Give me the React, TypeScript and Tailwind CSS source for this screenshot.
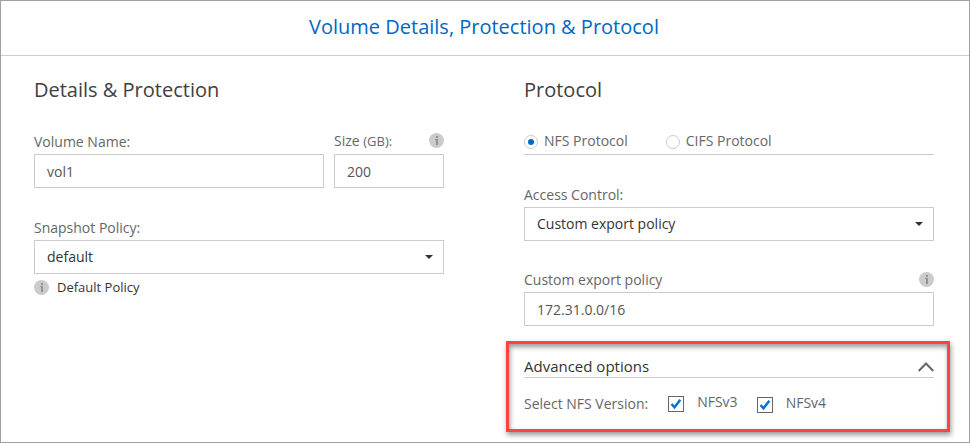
import type { ReactNode } from "react";

function InfoIcon() {
  return (
    <svg width="15" height="15" viewBox="0 0 15 15" className="block shrink-0">
      <circle cx="7.5" cy="7.5" r="7.5" fill="#cbcbcb" />
      <rect x="7" y="3" width="2" height="2" fill="#929292" />
      <path d="M6 6H9V12H7V7H6Z" fill="#929292" />
    </svg>
  );
}

function Caret() {
  return (
    <svg width="8" height="4" viewBox="0 0 8 4" className="block shrink-0">
      <path d="M0 0H8L4 4Z" fill="#333" />
    </svg>
  );
}

function Label({ children, info }: { children: ReactNode; info?: boolean }) {
  return (
    <div className="flex h-5 items-start justify-between leading-[17px]">
      <span>{children}</span>
      {info && (
        <span className="mt-px">
          <InfoIcon />
        </span>
      )}
    </div>
  );
}

function TextField({ value }: { value: string }) {
  return (
    <div className="flex h-[34px] items-center border border-[#ccc] px-3 pt-0.5 text-[#555]">{value}</div>
  );
}

function Select({ value }: { value: string }) {
  return (
    <div className="flex h-[34px] items-center justify-between border border-[#ccc] pr-[10px] pl-3 text-[#333]">
      <span>{value}</span>
      <Caret />
    </div>
  );
}

function Radio({ label, checked }: { label: string; checked?: boolean }) {
  return (
    <div className="flex items-start">
      <span className="mt-[3px] mr-1.5 flex size-[14px] items-center justify-center rounded-full border border-[#ccc]">
        {checked && <span className="size-[6px] rounded-full bg-[#0067c5]" />}
      </span>
      <span className="leading-[17px]">{label}</span>
    </div>
  );
}

function Checkbox({ label }: { label: string }) {
  return (
    <div className="flex items-start">
      <svg width="16" height="16" viewBox="0 0 16 16" className="mr-[13px] block">
        <rect x="0.5" y="0.5" width="15" height="15" fill="#fff" stroke="#666" />
        <path d="M3.5 8L6.5 11.3L12.3 3.8" fill="none" stroke="#0070d2" strokeWidth="2.4" />
      </svg>
      <span className="-mt-[3px] leading-[17px]">{label}</span>
    </div>
  );
}

export default function App() {
  return (
    <div className="flex h-[443px] w-[970px] flex-col border border-[#a0a0a0] bg-white font-['Open_Sans',sans-serif] text-sm text-[#666]">
      <header className="flex h-[55px] shrink-0 items-center justify-center border-b border-[#ccc] pr-0.5 pb-0.5 text-xl text-[#0067c5]">
        Volume Details, Protection &amp; Protocol
      </header>
      <main className="flex gap-20 px-[33px] pt-5">
        <section className="w-[410px]">
          <h2 className="h-14 text-xl leading-7 text-[#404040]">Details &amp; Protection</h2>
          <div className="flex gap-[10px]">
            <div className="w-[290px]">
              <div className="pt-px pb-px">
                <Label>Volume Name:</Label>
              </div>
              <TextField value="vol1" />
            </div>
            <div className="w-[110px]">
              <div className="pb-0.5">
                <Label info>
                  Size <span className="text-[13px]">(GB):</span>
                </Label>
              </div>
              <TextField value="200" />
            </div>
          </div>
          <div className="mt-[31px] mb-px">
            <Label>Snapshot Policy:</Label>
          </div>
          <Select value="default" />
          <div className="mt-1.5 flex items-start gap-2 text-[13px] leading-[15px] text-[#333]">
            <InfoIcon />
            <span>Default Policy</span>
          </div>
        </section>
        <section className="w-[410px]">
          <h2 className="h-14 text-xl leading-7 text-[#404040]">Protocol</h2>
          <div className="flex h-[23px] gap-[38px] border-b border-[#ccc]">
            <Radio label="NFS Protocol" checked />
            <Radio label="CIFS Protocol" />
          </div>
          <div className="mt-[31px] mb-px">
            <Label>Access Control:</Label>
          </div>
          <Select value="Custom export policy" />
          <div className="mt-[30px] mb-px">
            <Label info>Custom export policy</Label>
          </div>
          <TextField value="172.31.0.0/16" />
          <div className="mt-[15px] -mr-4 -ml-[18px] h-[91px] border-3 border-[#ff4343] pt-3 pr-[13px] pl-[15px] shadow-[1px_3px_5px_rgba(0,0,0,0.4),inset_1px_3px_5px_rgba(0,0,0,0.4)]">
            <div className="flex h-[22px] items-start justify-between border-b border-[#ccc] text-[15px] text-[#333]">
              <span className="leading-[20px]">Advanced options</span>
              <svg width="16" height="10" viewBox="0 0 16 10" className="mt-1.5 block">
                <path d="M0.7 9L8 1.5L15.3 9" fill="none" stroke="#666" strokeWidth="2" />
              </svg>
            </div>
            <div className="flex items-start pt-4">
              <span className="mr-5 leading-[20px]">Select NFS Version:</span>
              <div className="mt-0.5 mr-[19px]">
                <Checkbox label="NFSv3" />
              </div>
              <div className="mt-[3px]">
                <Checkbox label="NFSv4" />
              </div>
            </div>
          </div>
        </section>
      </main>
    </div>
  );
}
